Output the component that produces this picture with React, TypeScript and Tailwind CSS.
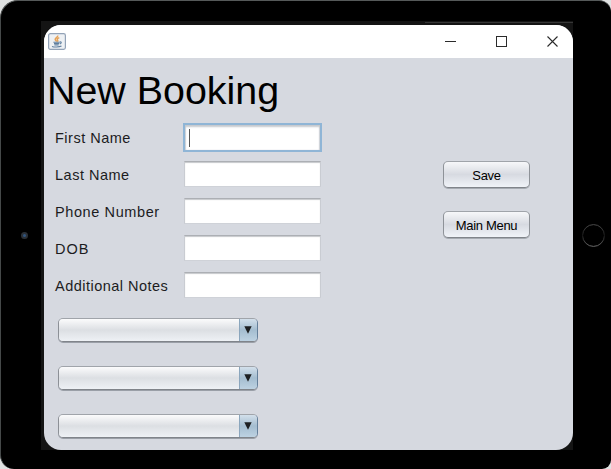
import React from "react";

const fields = [
  { label: "First Name", spacing: "tracking-[0.5px]" },
  { label: "Last Name", spacing: "tracking-[0.5px]" },
  { label: "Phone Number", spacing: "tracking-[0.6px]" },
  { label: "DOB", spacing: "tracking-[1px]" },
  { label: "Additional Notes", spacing: "tracking-[0.48px]" },
];

function JavaIcon() {
  return (
    <svg width="18" height="17" viewBox="0 0 18 17" fill="none">
      <rect x="0.6" y="0.6" width="16.8" height="15.8" rx="1.8" fill="#eef1f4" stroke="#93a3b7" strokeWidth="1.2" />
      <path d="M9.7 2.5c.5 1.7-2.6 2.3-2.5 3.9.1 1 1 1.5 1.5 2.1M11.3 4.6c-2 .9-2.5 1.6-1.7 2.6.4.6.2 1.1-.2 1.5" stroke="#e6a256" strokeWidth="1.5" />
      <path d="M5.4 9.2h6.3M6 10.6h5.3M6.4 12h4.2M11.8 9c1.8-.5 2 1.1.2 1.9M4 13.4c2 .8 7.2.8 9.5-.3" stroke="#5f7f9f" strokeWidth="1.1" />
    </svg>
  );
}

function TitleBar() {
  return (
    <header className="flex h-[33px] shrink-0 items-center bg-white pl-1">
      <div className="-mt-px"><JavaIcon /></div>
      <div className="ml-auto flex pr-[15px]">
        <svg width="113" height="12" viewBox="0 0 113 12" fill="none" stroke="#2b2b2b">
          <path d="M0 5.5h11" />
          <rect x="51.5" y="0.5" width="10" height="10" />
          <path d="M102.5 0.5l10 10M112.5 0.5l-10 10" strokeWidth="1.1" />
        </svg>
      </div>
    </header>
  );
}

function Field({ label, spacing, focused }: { label: string; spacing: string; focused: boolean }) {
  return (
    <label className="flex h-[37px] items-center">
      <span className={`w-[129px] whitespace-nowrap text-[14.5px] leading-4 text-[#1c1c1e] ${spacing}`}>
        {label}
      </span>
      {focused ? (
        <span className="-ml-px -mt-px flex h-[29px] w-[139px] border-2 border-[#8fb5d6] bg-white pl-1 pt-1 shadow-[inset_0_2px_2px_#c4c8cd,inset_1px_0_1px_#d0d4da,inset_-1px_0_1px_#d0d4da]">
          <span className="h-[18px] w-px bg-[#555]" />
        </span>
      ) : (
        <span className="-mt-0.5 h-[26px] w-[137px] border border-t-[#acafb4] border-x-[#c9ccd2] border-b-[#cfd2d8] bg-white shadow-[inset_0_1px_1px_#c6c8cb]" />
      )}
    </label>
  );
}

function PushButton({ children }: { children: React.ReactNode }) {
  return (
    <button className="h-[27px] w-[87px] rounded-[5px] border border-t-[#a0a4aa] border-x-[#8e9298] border-b-[#80848a] bg-linear-to-b from-[#f7f8fa] via-[#d7dae1] to-[#f0f3f8] pt-0.5 text-[13px] leading-4 tracking-[-0.3px] text-black shadow-[0_1px_0_#a6abb2]">
      {children}
    </button>
  );
}

function Combo() {
  return (
    <div className="flex h-6 w-[200px] overflow-hidden rounded-[5px] border border-t-[#a0a4aa] border-l-[#8c9096] border-r-[#647f9a] border-b-[#80848a] shadow-[0_1px_0_#9a9fa7]">
      <div className="flex-1 bg-linear-to-b from-[#fbfbfc] via-[#dcdfe3] to-[#eef1f5]" />
      <div className="flex w-[18px] items-center justify-center border-l border-[#8ba6bd] bg-linear-to-b from-[#d3e0eb] via-[#a4bdd0] to-[#bdd2e2]">
        <svg width="8" height="8" viewBox="0 0 8 8">
          <path d="M0.3 0.3h7.4L4 7.8z" fill="#1d1f21" />
        </svg>
      </div>
    </div>
  );
}

function HomeButton() {
  return (
    <svg width="24" height="24" viewBox="0 0 24 24" fill="none">
      <defs>
        <linearGradient id="ring" x1="0" y1="0" x2="0" y2="1">
          <stop offset="0" stopColor="#4c4c4c" />
          <stop offset="0.5" stopColor="#1c1c1c" />
          <stop offset="1" stopColor="#6c6c6c" />
        </linearGradient>
      </defs>
      <circle cx="11.5" cy="12.5" r="10.9" stroke="url(#ring)" />
    </svg>
  );
}

export default function App() {
  return (
    <div className="h-[469px] w-[611px] overflow-hidden bg-[#dfe1e1] font-['Liberation_Sans',Arial,sans-serif]">
      <div className="flex h-[469px] w-[611px] rounded-tl-[18px] rounded-tr-[12px] rounded-br-[9px] rounded-bl-[14px] border-l border-t border-l-[#454949] border-t-[#555959] bg-black">
        <div className="flex w-10 shrink-0 items-center pl-5">
          <span className="mt-px size-[7px] rounded-full border-2 border-[#2b3036] bg-[#315580]" />
        </div>
        <div className="mt-5 h-[429px] w-[532px] shrink-0 bg-[#141414] pl-[3px]">
          <div className="flex h-1 justify-end pt-px">
            <span className="h-px w-[148px] bg-[#363636]" />
          </div>
          <main className="flex h-[425px] w-[529px] flex-col overflow-hidden rounded-[17px] bg-[#d6d9e0]">
            <TitleBar />
            <h1 className="h-[61px] whitespace-nowrap pl-[3px] pt-[10px] text-[39.4px] leading-[45px] text-black">New Booking</h1>
            <div className="flex">
              <div className="w-[399px] pl-[11px]">
                {fields.map((field, i) => (
                  <Field key={field.label} {...field} focused={i === 0} />
                ))}
              </div>
              <div className="flex flex-col gap-[23px] pt-[42px]">
                <PushButton>Save</PushButton>
                <PushButton>Main Menu</PushButton>
              </div>
            </div>
            <div className="flex flex-col gap-6 pl-[13.5px] pt-[14px]">
              <Combo />
              <Combo />
              <Combo />
            </div>
          </main>
        </div>
        <div className="flex flex-1 items-center pl-[9px]"><HomeButton /></div>
      </div>
    </div>
  );
}
